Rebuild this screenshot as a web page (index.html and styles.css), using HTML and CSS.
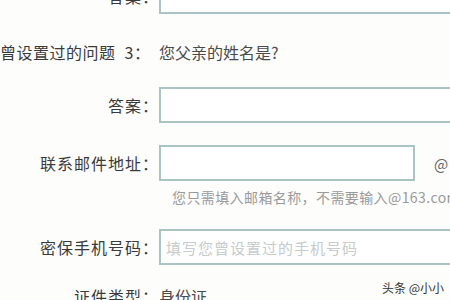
FILE: index.html
```html
<!DOCTYPE html>
<html lang="zh-CN">
<head>
<meta charset="utf-8">
<link rel="stylesheet" href="styles.css">
</head>
<body>
<div class="form">
  <div class="row first">
    <div class="label">答案：</div>
    <div class="field wide"></div>
  </div>
  <div class="row question">
    <div class="label q">曾设置过的问题 3：</div>
    <div class="value">您父亲的姓名是?</div>
  </div>
  <div class="row">
    <div class="label">答案：</div>
    <div class="field wide"></div>
  </div>
  <div class="row email">
    <div class="label">联系邮件地址：</div>
    <div class="field short"></div>
    <div class="at">@</div>
  </div>
  <div class="hint">您只需填入邮箱名称，不需要输入@163.com</div>
  <div class="row phone">
    <div class="label">密保手机号码：</div>
    <div class="field wide"><span class="placeholder">填写您曾设置过的手机号码</span></div>
  </div>
  <div class="row last">
    <div class="label">证件类型：</div>
    <div class="value">身份证</div>
  </div>
</div>
<div class="watermark">头条 @小小</div>
</body>
</html>
```
FILE: styles.css
```css
html, body {
  margin: 0;
  padding: 0;
  width: 450px;
  height: 300px;
  overflow: hidden;
  background: #fdfdfc;
  font-family: "Noto Sans CJK SC", "Liberation Sans", sans-serif;
  color: #3a3a3a;
}
.form {
  margin-top: -22px;
  display: flex;
  flex-direction: column;
}
.row {
  display: flex;
  align-items: center;
  height: 36px;
  gap: 8px;
}
.label {
  width: 151px;
  flex: none;
  text-align: right;
  font-size: 16px;
  letter-spacing: 1px;
  white-space: nowrap;
  line-height: 20px;
  font-feature-settings: "halt";
}
.label.q {
  letter-spacing: 0.5px;
  word-spacing: 5px;
  padding-right: 14px;
  box-sizing: border-box;
}
.value {
  font-size: 16px;
  line-height: 20px;
  color: #4a4a4a;
  white-space: nowrap;
}
.field {
  box-sizing: border-box;
  height: 36px;
  border: 2px solid #a9c4c3;
  background: #fff;
  flex: none;
  display: flex;
  align-items: center;
  padding-left: 5px;
}
.field.wide { width: 320px; }
.field.short { width: 256px; }
.row.question { margin-top: 20px; }
.row.question + .row { margin-top: 17px; }
.row.email { margin-top: 22px; }
.at {
  margin-left: 11px;
  font-size: 15px;
  color: #666;
}
.hint {
  margin-top: 8px;
  margin-left: 172px;
  height: 16px;
  line-height: 16px;
  font-size: 14px;
  letter-spacing: 0.4px;
  color: #9a9a9a;
  white-space: nowrap;
}
.row.phone { margin-top: 24px; }
.placeholder {
  font-size: 15px;
  color: #c6cbcb;
  letter-spacing: 1px;
  white-space: nowrap;
}
.row.last { margin-top: 13px; }
.watermark {
  position: absolute;
  left: 382px;
  top: 279px;
  font-size: 12px;
  color: #333;
  white-space: nowrap;
}
```
